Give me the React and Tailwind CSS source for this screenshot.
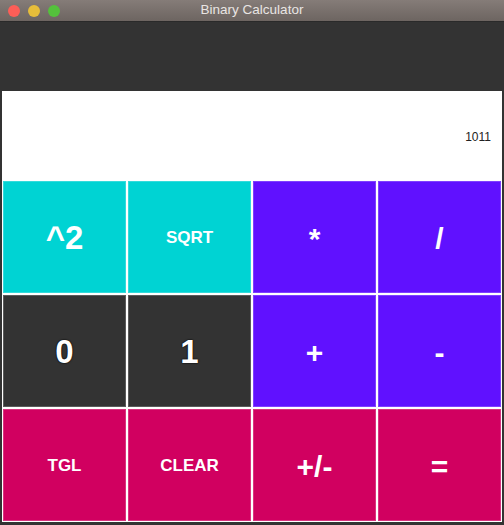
import React from 'react';

const keys = [
  { label: '^2', color: 'bg-[#00d3d3]', size: 'text-[33px]' },
  { label: 'SQRT', color: 'bg-[#00d3d3]', size: 'text-[17px]' },
  { label: '*', color: 'bg-[#6011ff]', size: 'text-[30px]' },
  { label: '/', color: 'bg-[#6011ff]', size: 'text-[30px]' },
  { label: '0', color: 'bg-[#333333]', size: 'text-[33px]', outline: true },
  { label: '1', color: 'bg-[#333333]', size: 'text-[33px]', outline: true },
  { label: '+', color: 'bg-[#6011ff]', size: 'text-[30px]' },
  { label: '-', color: 'bg-[#6011ff]', size: 'text-[30px]' },
  { label: 'TGL', color: 'bg-[#d10060]', size: 'text-[17px]' },
  { label: 'CLEAR', color: 'bg-[#d10060]', size: 'text-[17px]' },
  { label: '+/-', color: 'bg-[#d10060]', size: 'text-[30px]' },
  { label: '=', color: 'bg-[#d10060]', size: 'text-[30px]' },
];

const App = () => {
  return (
    <div className="w-[504px] h-[525px] flex flex-col bg-[#333333] font-['Liberation_Sans',Arial,sans-serif] overflow-hidden">
      <div className="h-[22px] shrink-0 flex items-center relative bg-gradient-to-b from-[#857c78] to-[#6d6561] border-b border-[#2a2a2a]">
        <div className="flex gap-[8px] pl-[8px]">
          <span className="w-[12px] h-[12px] rounded-full bg-[#fd5e57]" />
          <span className="w-[12px] h-[12px] rounded-full bg-[#e6bd3a]" />
          <span className="w-[12px] h-[12px] rounded-full bg-[#54c13c]" />
        </div>
        <div className="absolute inset-0 flex items-center justify-center text-[13.5px] text-[#e9e5e3]">
          Binary Calculator
        </div>
      </div>

      <div className="flex flex-col px-[2px]">
        <div className="h-[69px]" />
        <div className="h-[89px] bg-white flex items-center justify-end pr-[11px] pt-[2px]">
          <span className="text-[12px] text-[#222]">1011</span>
        </div>
        <div className="bg-white p-[1px] grid grid-cols-4 grid-rows-3 gap-[2px] h-[342px]">
          {keys.map((k) => (
            <button
              key={k.label}
              className={`${k.color} ${k.size} border border-white/20 flex items-center justify-center font-bold text-white pt-[2px]`}
              style={k.outline ? { textShadow: '0 0 2px #000, 0 0 1px #000' } : undefined}
            >
              {k.label}
            </button>
          ))}
        </div>
      </div>
    </div>
  );
};

export default App;
